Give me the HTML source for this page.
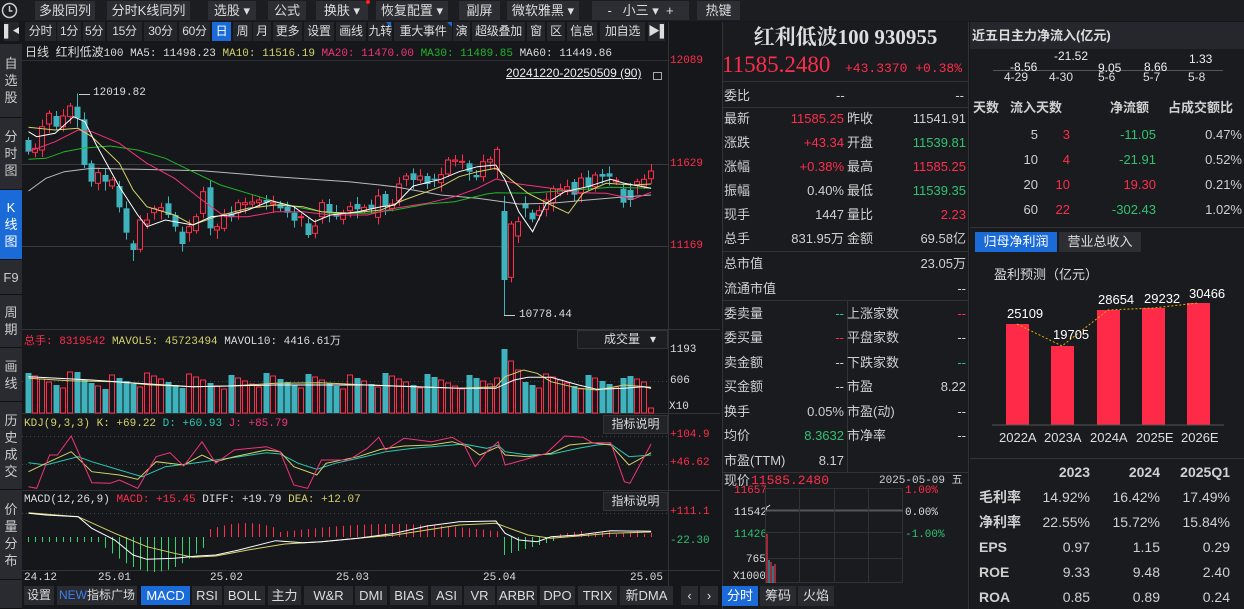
<!DOCTYPE html>
<html><head><meta charset="utf-8">
<style>
*{margin:0;padding:0;box-sizing:border-box}
body{width:1244px;height:609px;background:#16171b;overflow:hidden;position:relative;font-family:"Liberation Sans","Noto Sans CJK SC",sans-serif;font-size:12px;color:#d0d0d0}
.a{position:absolute;white-space:nowrap}
.btn{position:absolute;top:1px;height:19px;background:#2d2e33;color:#ddd;font-size:13px;line-height:19px;text-align:center;white-space:nowrap;overflow:hidden}
.t2{position:absolute;top:22px;height:19px;background:#25262b;color:#ddd;font-size:12px;line-height:19px;text-align:center;white-space:nowrap;overflow:hidden;letter-spacing:-0.3px}
.side{position:absolute;left:0;width:22px;background:#2a2b30;color:#ccc;font-size:13px;text-align:center;display:flex;align-items:center;justify-content:center;line-height:17px;border-bottom:1px solid #111}
.bt{position:absolute;top:586px;height:19px;background:#2a2b30;color:#ddd;font-size:12px;line-height:19px;text-align:center;white-space:nowrap;overflow:hidden}
.m{font-family:"Liberation Mono","Noto Sans CJK SC",monospace;font-size:11px}
.r{color:#ff2d4b}.g{color:#2fc270}.y{color:#d4d26a}.w{color:#ddd}
.row{position:absolute;left:724px;width:244px;height:22px;font-size:13px;line-height:22px;white-space:nowrap}
.row span{position:absolute}
.rr{position:absolute;left:970px;width:274px;font-size:13px;line-height:20px;white-space:nowrap}
.rr span{position:absolute}
</style></head><body>
<div class="a" style="left:0;top:0;width:1244px;height:21px;background:#1c1d21"></div>
<svg class="a" style="left:1px;top:2px" width="17" height="17"><circle cx="8.5" cy="8.5" r="7" fill="none" stroke="#ccc" stroke-width="1.5"/><path d="M8.5 4v5h3" stroke="#ccc" stroke-width="1.5" fill="none"/></svg>
<div class="btn" style="left:35px;width:60px">多股同列</div>
<div class="btn" style="left:107px;width:83px">分时K线同列</div>
<div class="btn" style="left:208px;width:48px">选股 ▾</div>
<div class="btn" style="left:268px;width:38px">公式</div>
<div class="btn" style="left:316px;width:52px">换肤 ▾</div>
<div class="a" style="left:366px;top:0;width:4px;height:4px;border-radius:2px;background:#f22"></div>
<div class="btn" style="left:376px;width:72px">恢复配置 ▾</div>
<div class="btn" style="left:459px;width:41px">副屏</div>
<div class="btn" style="left:507px;width:72px">微软雅黑 ▾</div>
<div class="btn" style="left:592px;width:97px">-&nbsp;&nbsp; 小三 ▾&nbsp; +</div>
<div class="btn" style="left:697px;width:43px">热键</div>
<div class="t2" style="left:4px;width:15px">▌◀</div>
<div class="t2" style="left:25px;width:31px">分时</div>
<div class="t2" style="left:57px;width:24px">1分</div>
<div class="t2" style="left:83px;width:22px">5分</div>
<div class="t2" style="left:107px;width:35px">15分</div>
<div class="t2" style="left:144px;width:33px">30分</div>
<div class="t2" style="left:179px;width:31px">60分</div>
<div class="t2" style="left:212px;width:19px;background:#1a6ad8;color:#fff">日</div>
<div class="t2" style="left:233px;width:19px">周</div>
<div class="t2" style="left:253px;width:18px">月</div>
<div class="t2" style="left:273px;width:29px">更多</div>
<div class="t2" style="left:304px;width:30px">设置</div>
<div class="t2" style="left:336px;width:30px">画线</div>
<div class="t2" style="left:368px;width:24px;text-align:right">九转</div>
<div class="t2" style="left:394px;width:58px">重大事件</div>
<div class="t2" style="left:453px;width:17px">演</div>
<div class="t2" style="left:472px;width:53px">超级叠加</div>
<div class="t2" style="left:527px;width:18px">窗</div>
<div class="t2" style="left:547px;width:18px">区</div>
<div class="t2" style="left:567px;width:30px">信息</div>
<div class="t2" style="left:600px;width:45px">加自选</div>
<div class="t2" style="left:648px;width:17px">▶▌</div>
<div class="a" style="left:386px;top:22px;border-top:5px solid #1a6ad8;border-left:5px solid transparent"></div>
<div class="a" style="left:447px;top:22px;border-top:5px solid #1a6ad8;border-left:5px solid transparent"></div>
<div class="side" style="top:44px;height:74px">自<br>选<br>股</div>
<div class="side" style="top:118px;height:72px">分<br>时<br>图</div>
<div class="side" style="top:190px;height:70px;background:#1a6ad8;color:#fff">K<br>线<br>图</div>
<div class="side" style="top:260px;height:35px">F9</div>
<div class="side" style="top:295px;height:53px">周<br>期</div>
<div class="side" style="top:348px;height:54px">画<br>线</div>
<div class="side" style="top:402px;height:88px">历<br>史<br>成<br>交</div>
<div class="side" style="top:490px;height:90px">价<br>量<br>分<br>布</div>
<div class="side" style="top:580px;height:29px"></div>

<svg id="ch" class="a" style="left:0;top:0" width="720" height="609"></svg>

<div class="a" style="left:25px;top:43px;font-size:12px;color:#ddd">日线&nbsp; 红利低波<span class="m">100 MA5: 11498.23 <span class="y">MA10: 11516.19</span> <span style="color:#f3337a">MA20: 11470.00</span> <span style="color:#22b52a">MA30: 11489.85</span> MA60: 11449.86</span></div>
<div class="a" style="left:506px;top:66px;font-size:12px;color:#eee;text-decoration:underline">20241220-20250509 (90)</div>
<div class="a" style="left:653px;top:72px;width:9px;height:8px;border:1px solid #aaa"></div>
<div class="a m" style="left:93px;top:87px;color:#ddd">12019.82</div>
<div class="a m" style="left:519px;top:309px;color:#ddd">10778.44</div>
<div class="a m r" style="left:670px;top:55px">12089</div>
<div class="a m r" style="left:670px;top:158px">11629</div>
<div class="a m r" style="left:670px;top:240px">11169</div>
<div class="a m" style="left:24px;top:332px"><span class="r">总手: 8319542</span> <span class="y">MAVOL5: 45723494</span> <span class="w">MAVOL10: 4416.61万</span></div>
<div class="a" style="left:577px;top:330px;width:91px;height:19px;background:#1d1e22;border:1px solid #333;font-size:12px;line-height:17px;color:#ddd;padding-left:26px">成交量 &nbsp;&nbsp;▾</div>
<div class="a m w" style="left:670px;top:344px">1193</div>
<div class="a m w" style="left:670px;top:375px">606</div>
<div class="a m w" style="left:669px;top:401px">X10</div>
<div class="a m" style="left:24px;top:418px"><span class="y">KDJ(9,3,3) K: +69.22</span> <span style="color:#27c9b4">D: +60.93</span> <span style="color:#f3337a">J: +85.79</span></div>
<div class="a" style="left:603px;top:415px;width:65px;height:19px;background:#222327;border:1px solid #333;font-size:12px;line-height:17px;color:#ddd;text-align:center">指标说明</div>
<div class="a m r" style="left:670px;top:429px">+104.9</div>
<div class="a m r" style="left:670px;top:457px">+46.62</div>
<div class="a m" style="left:24px;top:494px"><span class="w">MACD(12,26,9)</span> <span class="r">MACD: +15.45</span> <span class="w">DIFF: +19.79</span> <span class="y">DEA: +12.07</span></div>
<div class="a" style="left:603px;top:492px;width:65px;height:19px;background:#222327;border:1px solid #333;font-size:12px;line-height:17px;color:#ddd;text-align:center">指标说明</div>
<div class="a m r" style="left:670px;top:506px">+111.1</div>
<div class="a m g" style="left:670px;top:535px">-22.30</div>
<div class="a m w" style="left:24px;top:572px">24.12</div>
<div class="a m w" style="left:98px;top:572px">25.01</div>
<div class="a m w" style="left:210px;top:572px">25.02</div>
<div class="a m w" style="left:336px;top:572px">25.03</div>
<div class="a m w" style="left:483px;top:572px">25.04</div>
<div class="a m w" style="left:630px;top:572px">25.05</div>
<div class="bt" style="left:24px;width:30px">设置</div>
<div class="bt" style="left:57px;width:80px"><span style="color:#3d7ff0">NEW</span>指标广场</div>
<div class="bt" style="left:141px;width:49px;background:#1a6ad8;color:#fff;font-size:13px">MACD</div>
<div class="bt" style="left:192px;width:30px;font-size:13px">RSI</div>
<div class="bt" style="left:224px;width:41px;font-size:13px">BOLL</div>
<div class="bt" style="left:268px;width:33px;font-size:13px">主力</div>
<div class="bt" style="left:304px;width:49px;font-size:13px">W&amp;R</div>
<div class="bt" style="left:355px;width:32px;font-size:13px">DMI</div>
<div class="bt" style="left:390px;width:38px;font-size:13px">BIAS</div>
<div class="bt" style="left:431px;width:31px;font-size:13px">ASI</div>
<div class="bt" style="left:464px;width:31px;font-size:13px">VR</div>
<div class="bt" style="left:497px;width:40px;font-size:13px">ARBR</div>
<div class="bt" style="left:540px;width:35px;font-size:13px">DPO</div>
<div class="bt" style="left:578px;width:39px;font-size:13px">TRIX</div>
<div class="bt" style="left:620px;width:53px;font-size:13px">新DMA</div>
<div class="bt" style="left:681px;width:17px;font-size:13px">‹</div>
<div class="bt" style="left:700px;width:18px;font-size:13px">›</div>

<div class="a" style="left:722px;top:22px;width:247px;height:587px;background:#1a1b1f;border-left:1px solid #333;border-right:1px solid #333"></div>
<div class="a" style="left:722px;top:21px;width:247px;text-align:center;font-family:'Liberation Serif','Noto Serif CJK SC',serif;font-size:21px;font-weight:bold;color:#ddd">红利低波100 930955</div>
<div class="a" style="left:722px;top:52px;font-family:'Liberation Serif','Noto Serif CJK SC',serif;font-size:23px;color:#ff2d4b">11585.2480</div>
<div class="a m r" style="left:845px;top:61px;font-size:13px">+43.3370 +0.38%</div>
<div class="a" style="left:722px;top:81px;width:247px;height:1px;background:#333"></div>
<div class="row" style="top:85px"><span style="left:0">委比</span><span style="left:112px">--</span><span style="right:4px">--</span></div>
<div class="a" style="left:722px;top:107px;width:247px;height:1px;background:#333"></div>
<div class="row" style="top:108px"><span style="left:0">最新</span><span class="r" style="right:124px">11585.25</span><span style="left:123px">昨收</span><span style="right:2px">11541.91</span></div>
<div class="row" style="top:132px"><span style="left:0">涨跌</span><span class="r" style="right:124px">+43.34</span><span style="left:123px">开盘</span><span class="g" style="right:2px">11539.81</span></div>
<div class="row" style="top:156px"><span style="left:0">涨幅</span><span class="r" style="right:124px">+0.38%</span><span style="left:123px">最高</span><span class="r" style="right:2px">11585.25</span></div>
<div class="row" style="top:180px"><span style="left:0">振幅</span><span style="right:124px">0.40%</span><span style="left:123px">最低</span><span class="g" style="right:2px">11539.35</span></div>
<div class="row" style="top:204px"><span style="left:0">现手</span><span style="right:124px">1447</span><span style="left:123px">量比</span><span class="r" style="right:2px">2.23</span></div>
<div class="row" style="top:228px"><span style="left:0">总手</span><span style="right:124px">831.95万</span><span style="left:123px">金额</span><span style="right:2px">69.58亿</span></div>
<div class="a" style="left:722px;top:251px;width:247px;height:1px;background:#333"></div>
<div class="row" style="top:253px"><span style="left:0">总市值</span><span style="right:2px">23.05万</span></div>
<div class="row" style="top:278px"><span style="left:0">流通市值</span><span style="right:2px">--</span></div>
<div class="a" style="left:722px;top:300px;width:247px;height:1px;background:#333"></div>
<div class="a" style="left:847px;top:300px;width:1px;height:172px;background:#333"></div>
<div class="row" style="top:303px"><span style="left:0">委卖量</span><span style="right:124px;color:#2fc2b0">--</span><span style="left:123px">上涨家数</span><span class="r" style="right:2px">--</span></div>
<div class="row" style="top:327px"><span style="left:0">委买量</span><span class="r" style="right:124px">--</span><span style="left:123px">平盘家数</span><span style="right:2px">--</span></div>
<div class="row" style="top:352px"><span style="left:0">卖金额</span><span style="right:124px">--</span><span style="left:123px">下跌家数</span><span class="g" style="right:2px">--</span></div>
<div class="row" style="top:376px"><span style="left:0">买金额</span><span style="right:124px">--</span><span style="left:123px">市盈</span><span style="right:2px">8.22</span></div>
<div class="row" style="top:401px"><span style="left:0">换手</span><span style="right:124px">0.05%</span><span style="left:123px">市盈(动)</span><span style="right:2px">--</span></div>
<div class="row" style="top:425px"><span style="left:0">均价</span><span class="g" style="right:124px">8.3632</span><span style="left:123px">市净率</span><span style="right:2px">--</span></div>
<div class="row" style="top:450px"><span style="left:0">市盈(TTM)</span><span style="right:124px">8.17</span></div>
<div class="a" style="left:722px;top:472px;width:247px;height:1px;background:#333"></div>
<div class="a" style="left:724px;top:474px;width:244px;height:12px;overflow:hidden;font-size:13px;line-height:14px"><span>现价</span><span class="r m" style="position:absolute;left:27px;font-size:13px">11585.2480</span><span style="position:absolute;left:155px" class="m">2025-05-09 五</span></div>
<div class="a m r" style="left:734px;top:485px">11657</div>
<div class="a m w" style="left:734px;top:507px">11542</div>
<div class="a m g" style="left:734px;top:529px">11426</div>
<div class="a m w" style="left:746px;top:554px">765</div>
<div class="a m w" style="left:733px;top:571px">X1000</div>
<div class="a m r" style="left:905px;top:485px">1.00%</div>
<div class="a m w" style="left:905px;top:507px">0.00%</div>
<div class="a m g" style="left:905px;top:529px">-1.00%</div>
<div class="a" style="left:722px;top:586px;width:36px;height:20px;background:#1a6ad8;color:#fff;font-size:13px;line-height:20px;text-align:center">分时</div>
<div class="a" style="left:760px;top:586px;width:36px;height:20px;background:#2a2b30;color:#ddd;font-size:13px;line-height:20px;text-align:center">筹码</div>
<div class="a" style="left:798px;top:586px;width:36px;height:20px;background:#2a2b30;color:#ddd;font-size:13px;line-height:20px;text-align:center">火焰</div>

<div class="a" style="left:970px;top:22px;width:274px;height:587px;background:#1a1b1f"></div>
<div class="a" style="left:970px;top:22px;width:274px;height:27px;background:#26272c;font-size:13px;font-weight:bold;line-height:27px;padding-left:2px;color:#ddd">近五日主力净流入(亿元)</div>
<div class="a" style="left:993px;top:70px;width:230px;height:1px;background:#555"></div>
<div class="a" style="font-size:12px;left:1010px;top:60px;color:#eee">-8.56</div>
<div class="a" style="font-size:12px;left:1054px;top:49px;color:#eee">-21.52</div>
<div class="a" style="font-size:12px;left:1098px;top:61px;color:#eee">9.05</div>
<div class="a" style="font-size:12px;left:1144px;top:60px;color:#eee">8.66</div>
<div class="a" style="font-size:12px;left:1189px;top:52px;color:#eee">1.33</div>
<div class="a" style="font-size:12px;left:1004px;top:70px;color:#ddd">4-29</div>
<div class="a" style="font-size:12px;left:1049px;top:70px;color:#ddd">4-30</div>
<div class="a" style="font-size:12px;left:1098px;top:70px;color:#ddd">5-6</div>
<div class="a" style="font-size:12px;left:1143px;top:70px;color:#ddd">5-7</div>
<div class="a" style="font-size:12px;left:1188px;top:70px;color:#ddd">5-8</div>
<div class="rr" style="top:98px;font-weight:bold"><span style="left:3px">天数</span><span style="left:40px">流入天数</span><span style="left:140px">净流额</span><span style="left:198px">占成交额比</span></div>
<div class="rr" style="top:125px"><span style="right:206px">5</span><span class="r" style="right:174px">3</span><span class="g" style="right:88px">-11.05</span><span style="right:2px">0.47%</span></div>
<div class="rr" style="top:150px"><span style="right:206px">10</span><span class="r" style="right:174px">4</span><span class="g" style="right:88px">-21.91</span><span style="right:2px">0.52%</span></div>
<div class="rr" style="top:175px"><span style="right:206px">20</span><span class="r" style="right:174px">10</span><span class="r" style="right:88px">19.30</span><span style="right:2px">0.21%</span></div>
<div class="rr" style="top:200px"><span style="right:206px">60</span><span class="r" style="right:174px">22</span><span class="g" style="right:88px">-302.43</span><span style="right:2px">1.02%</span></div>
<div class="a" style="left:970px;top:227px;width:274px;height:1px;background:#333"></div>
<div class="a" style="left:975px;top:232px;width:82px;height:20px;background:#1a6ad8;color:#fff;font-size:13px;line-height:20px;text-align:center">归母净利润</div>
<div class="a" style="left:1059px;top:232px;width:82px;height:20px;background:#2d2e33;color:#ddd;font-size:13px;line-height:20px;text-align:center">营业总收入</div>
<div class="a" style="left:994px;top:264px;font-size:13px;color:#ddd">盈利预测（亿元）</div>
<svg class="a" style="left:970px;top:290px" width="274" height="140">
<g fill="#ff2a48"><rect x="36" y="34" width="23" height="101"/><rect x="81" y="56" width="23" height="79"/><rect x="127" y="20" width="23" height="115"/><rect x="172" y="18" width="23" height="117"/><rect x="217" y="13" width="23" height="122"/></g>
<line x1="22" y1="135" x2="254" y2="135" stroke="#555"/>
<polyline points="47,34 92,56 138,20 183,18 228,13" fill="none" stroke="#e8b000" stroke-dasharray="2,2"/>
</svg>
<div class="a" style="left:1007px;top:306px;font-size:13px;color:#fff">25109</div>
<div class="a" style="left:1053px;top:327px;font-size:13px;color:#fff">19705</div>
<div class="a" style="left:1098px;top:292px;font-size:13px;color:#fff">28654</div>
<div class="a" style="left:1144px;top:291px;font-size:13px;color:#fff">29232</div>
<div class="a" style="left:1189px;top:286px;font-size:13px;color:#fff">30466</div>
<div class="a" style="left:999px;top:430px;font-size:13px;color:#ddd">2022A</div>
<div class="a" style="left:1044px;top:430px;font-size:13px;color:#ddd">2023A</div>
<div class="a" style="left:1090px;top:430px;font-size:13px;color:#ddd">2024A</div>
<div class="a" style="left:1136px;top:430px;font-size:13px;color:#ddd">2025E</div>
<div class="a" style="left:1181px;top:430px;font-size:13px;color:#ddd">2026E</div>
<div class="a" style="left:970px;top:458px;width:274px;height:1px;background:#333"></div>
<div class="rr" style="top:462px;font-weight:bold;font-size:14px"><span style="right:154px">2023</span><span style="right:84px">2024</span><span style="right:14px">2025Q1</span></div>
<div class="rr" style="top:487px;font-size:14px"><span style="left:9px;font-weight:bold">毛利率</span><span style="right:154px">14.92%</span><span style="right:84px">16.42%</span><span style="right:14px">17.49%</span></div>
<div class="rr" style="top:512px;font-size:14px"><span style="left:9px;font-weight:bold">净利率</span><span style="right:154px">22.55%</span><span style="right:84px">15.72%</span><span style="right:14px">15.84%</span></div>
<div class="rr" style="top:537px;font-size:14px"><span style="left:9px;font-weight:bold">EPS</span><span style="right:154px">0.97</span><span style="right:84px">1.15</span><span style="right:14px">0.29</span></div>
<div class="rr" style="top:562px;font-size:14px"><span style="left:9px;font-weight:bold">ROE</span><span style="right:154px">9.33</span><span style="right:84px">9.48</span><span style="right:14px">2.40</span></div>
<div class="rr" style="top:587px;font-size:14px"><span style="left:9px;font-weight:bold">ROA</span><span style="right:154px">0.85</span><span style="right:84px">0.89</span><span style="right:14px">0.24</span></div>

<script>
(function(){
var S=document.getElementById('ch'),h='';
function L(x1,y1,x2,y2,c,d){h+='<line x1="'+x1+'" y1="'+y1+'" x2="'+x2+'" y2="'+y2+'" stroke="'+c+'"'+(d?' stroke-dasharray="'+d+'"':'')+'/>';}
function R(x,y,w,hh,f,s){h+='<rect x="'+x+'" y="'+y+'" width="'+w+'" height="'+hh+'" fill="'+f+'"'+(s?' stroke="'+s+'"':'')+'/>';}
var RED='#ff2d4b',TEAL='#3eb3bd',GR='#2fd86e';
L(22,60.5,668,60.5,'#2e2f34');L(668.5,22,668.5,586,'#333');
L(22,164.5,668,164.5,'#38393e');L(22,246.5,668,246.5,'#38393e');
L(22,329.5,720,329.5,'#333');L(22,413.5,720,413.5,'#333');L(22,490.5,720,490.5,'#333');L(22,570.5,720,570.5,'#333');
L(22,381.5,668,381.5,'#444','1,3');L(22,436.5,668,436.5,'#444','1,3');L(22,464.5,668,464.5,'#444','1,3');L(22,513.5,668,513.5,'#444','1,3');
var C=[[180,215,0],[205,217,1],[140,210,1],[100,132,1],[108,140,0],[108,140,1],[78,110,1],[80,115,0,40],[118,255,0],[250,305,0],[278,310,1],[285,305,0],[300,318,1],[318,382,0],[385,458,0],[490,510,0,0,543],[420,508,1],[420,432,1],[385,398,1],[383,392,1],[370,405,0],[405,440,0],[455,492,0,0,515],[440,458,1],[410,452,1],[335,400,1],[322,445,0],[440,450,1],[402,445,1],[400,410,0],[368,398,1],[368,374,1],[366,372,1],[360,368,1],[360,368,0],[368,372,1],[372,385,0],[380,398,0],[398,422,0],[410,413,1],[430,465,0],[438,460,1],[368,410,1],[372,400,0],[396,410,0],[398,418,1],[380,392,1],[372,388,0],[382,392,1],[374,386,0],[348,412,1],[342,378,0],[372,385,1],[312,362,1],[288,298,1],[280,300,0],[288,300,1],[288,312,0],[296,300,0],[284,308,1],[240,282,1],[240,244,1],[244,246,1],[250,275,0],[285,292,0],[245,290,1],[238,246,1],[208,268,1,200],[393,600,0,348,706],[432,592,1],[425,468,1],[370,385,0],[398,418,0],[392,406,1],[360,388,1],[326,368,1],[326,340,1],[320,330,1],[306,344,0],[294,340,1],[292,322,0],[285,320,1],[282,290,0],[280,290,0],[300,306,1],[326,368,0],[330,360,0],[305,316,1],[298,318,1],[273,296,1]];
var N=C.length;
function Y5(z){return 80+z/3}
for(var i=0;i<N;i++){var c=C[i],x=28+i*7,t=Y5(c[0]),b=Y5(c[1]),col=c[2]?RED:TEAL;
 var hi=c[3]?Y5(c[3]):t-3-(i%3)*2,lo=c[4]?Y5(c[4]):b+3+(i%4)*2;
 L(x+0.5,hi,x+0.5,lo,col);
 if(c[2])R(x-2.5,t,5,Math.max(b-t,1),'#16171b',col);else R(x-2.5,t,6,Math.max(b-t,1),col);}
L(79,94.5,90,94.5,'#ccc');L(504,315.5,515,315.5,'#ccc');
function P(a,yo,c){var s='';for(var i=0;i<a.length;i+=2)s+=(a[i]/2.178).toFixed(1)+','+(yo+a[i+1]/3).toFixed(1)+' ';h+='<polyline points="'+s+'" fill="none" stroke="'+c+'" stroke-width="1"/>';}
P([62,333,100,295,140,275,200,265,300,268,440,272,600,290,760,305,860,320,960,345,1040,355,1130,372,1200,370,1280,360,1350,352,1418,345],80,'#bbb');
P([62,238,100,235,140,215,180,205,240,198,300,210,360,235,420,275,480,315,540,340,600,365,660,385,720,400,800,400,860,390,930,372,990,365,1060,342,1080,338,1150,340,1250,330,1330,322,1418,325],80,'#22b52a');
P([62,215,120,185,170,150,200,155,260,190,320,250,380,295,440,360,490,410,540,410,600,395,660,395,720,405,800,405,860,385,930,370,990,350,1040,325,1080,297,1130,312,1200,325,1260,338,1320,340,1380,357,1418,337],80,'#f3337a');
P([62,142,120,150,170,145,200,170,260,250,290,330,320,380,380,405,420,435,470,410,540,385,600,375,660,380,700,395,760,400,830,390,880,360,930,335,960,320,1000,290,1040,275,1080,265,1100,285,1150,340,1200,375,1238,400,1270,340,1320,310,1380,315,1418,312],80,'#d4d26a');
P([62,155,80,170,120,160,160,110,185,125,210,195,260,320,300,405,320,440,360,420,420,435,460,410,500,405,540,390,590,362,640,380,685,425,720,405,780,395,830,380,860,375,900,318,960,298,1000,275,1040,260,1080,255,1100,300,1130,395,1160,455,1190,370,1230,335,1280,320,1330,298,1360,310,1418,325],80,'#fff');
for(var i=0;i<N;i++){var x=28+i*7,c=C[i];var vt=373+((i*37)%17);
 if(i==68)vt=349;if(i==69)vt=361;if(i==70)vt=370;if(i==89)vt=408;if(i==6||i==7)vt=372;if(i==67)vt=378;if(i==85)vt=378;
 if(c[2])R(x-2.5,vt,5,413-vt,'#16171b',RED);else R(x-2.5,vt,6,413-vt,TEAL);}
P([62,175,150,182,250,185,330,195,420,200,500,198,600,190,700,188,800,195,900,200,1000,205,1080,200,1100,170,1140,150,1170,160,1200,185,1260,205,1300,210,1360,195,1418,202],320,'#d4d26a');
P([62,170,200,180,300,190,420,200,600,195,800,195,1000,205,1080,205,1120,180,1150,172,1200,172,1260,195,1300,208,1360,205,1400,200,1418,205],320,'#fff');
P([62,428,100,435,170,410,200,425,260,450,310,470,360,440,420,430,470,420,520,410,580,398,610,402,650,430,690,448,730,430,780,415,840,395,900,385,960,378,1010,372,1060,385,1085,375,1100,395,1150,405,1200,403,1260,385,1300,375,1330,372,1370,410,1418,405],320,'#27c9b4');
P([62,455,100,430,155,395,200,455,260,465,300,478,340,425,400,435,440,405,470,425,510,410,580,390,610,395,640,440,690,465,710,430,780,410,830,388,880,378,940,375,985,365,1020,380,1045,405,1085,380,1100,405,1150,410,1200,400,1240,375,1290,368,1330,375,1370,435,1418,398],320,'#d4d26a');
P([62,500,80,505,108,405,125,405,155,348,175,410,200,488,240,490,260,480,300,505,340,410,370,398,400,438,440,365,470,430,510,390,580,380,610,395,640,495,670,505,700,420,760,420,800,385,825,352,840,390,880,355,940,365,985,352,1010,372,1035,440,1060,395,1085,365,1100,435,1140,420,1190,400,1230,348,1270,352,1290,368,1330,368,1360,485,1372,490,1418,372],320,'#f3337a');
var base=537;
for(var i=0;i<90;i++){var x=28+i*7+0.5,v;
 if(i<=25){v=(i<10?-5:-5-Math.sin((i-10)/16*Math.PI)*30);}
 else if(i<=67){v=(i<36?8+Math.sin((i-26)/10*Math.PI)*6:5+Math.sin((i-36)/32*Math.PI)*8);}
 else if(i<=75){v=-18+(i-68)*2;}
 else v=3+(i%4);
 L(x,base,x,base-v,v>0?RED:GR);}
P([62,578,170,590,250,640,320,680,380,700,420,712,470,708,540,690,620,672,700,665,780,655,860,645,930,630,1000,615,1080,610,1100,620,1150,645,1200,655,1260,648,1330,640,1418,636],320,'#d4d26a');
P([62,580,100,585,170,590,200,625,250,660,290,705,320,718,380,715,430,708,470,705,520,690,600,662,660,668,700,665,780,655,860,640,930,618,1000,605,1080,603,1100,640,1130,660,1170,665,1200,650,1260,645,1330,632,1418,634],320,'#fff');
S.innerHTML=h;
})();
</script>
<svg class="a" style="left:765px;top:488px" width="140" height="96">
<g stroke="#333"><rect x="0.5" y="0.5" width="137" height="94" fill="none"/>
<line x1="0" y1="22.5" x2="138" y2="22.5" stroke="#555" stroke-width="2"/><line x1="0" y1="44.5" x2="138" y2="44.5"/><line x1="0" y1="70.5" x2="138" y2="70.5"/>
<line x1="34.5" y1="0" x2="34.5" y2="95"/><line x1="69.5" y1="0" x2="69.5" y2="95"/><line x1="103.5" y1="0" x2="103.5" y2="95"/></g>
<polyline points="1,22 2,19 4,18 5,17" stroke="#ddd" fill="none"/>
<g stroke-width="1.2"><line x1="2" y1="46" x2="2" y2="95" stroke="#ff2d4b"/><line x1="4" y1="72" x2="4" y2="95" stroke="#3eb3bd"/><line x1="6" y1="74" x2="6" y2="95" stroke="#ff2d4b"/><line x1="8" y1="78" x2="8" y2="95" stroke="#3eb3bd"/><line x1="10" y1="76" x2="10" y2="95" stroke="#ff2d4b"/></g>
</svg>
</body></html>
